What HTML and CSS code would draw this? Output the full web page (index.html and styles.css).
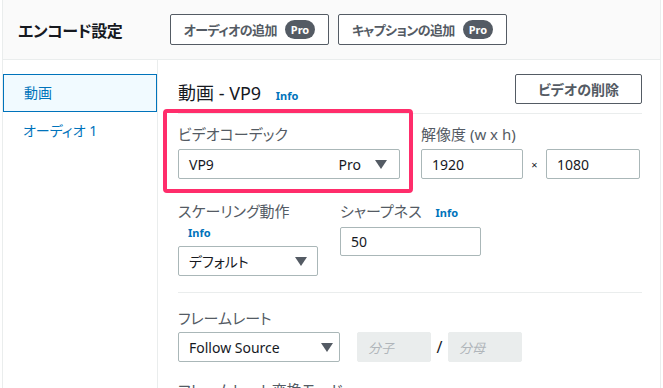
FILE: index.html
```html
<!DOCTYPE html>
<html lang="ja">
<head>
    <meta charset="UTF-8">
    <meta name="viewport" content="width=device-width, initial-scale=1.0">
    <title>エンコード設定</title>
    <link rel="stylesheet" href="styles.css">
</head>
<body>

    <div class="panel">

        <div class="header">
            <div class="head-title">エンコード設定</div>
            <button class="btn">オーディオの追加 <span class="pro">Pro</span></button>
            <button class="btn">キャプションの追加 <span class="pro">Pro</span></button>
        </div>

        <div class="body-block">
            <div class="side">
                <div class="side-item active">動画</div>
                <div class="side-item">オーディオ 1</div>
            </div>

            <div class="main">
                <div class="main-head">
                    <div class="main-title">動画 - VP9 <span class="info">Info</span></div>
                    <button class="btn btn-del">ビデオの削除</button>
                </div>

                <div class="row row-1">
                    <div class="field f-codec">
                        <div class="label">ビデオコーデック</div>
                        <div class="select">
                            <span>VP9</span>
                            <span class="sel-right">Pro <svg class="arrow" viewBox="0 0 12 9"><path d="M0 0h12L6 9z"/></svg></span>
                        </div>
                    </div>
                    <div class="field f-res">
                        <div class="label">解像度 (w x h)</div>
                        <div class="res-inputs">
                            <div class="input in-w">1920</div>
                            <span class="times">×</span>
                            <div class="input in-h">1080</div>
                        </div>
                    </div>
                    <div class="highlight"></div>
                </div>

                <div class="row row-2">
                    <div class="field f-scale">
                        <div class="label">スケーリング動作</div>
                        <div class="info info-line">Info</div>
                        <div class="select">
                            <span>デフォルト</span>
                            <svg class="arrow" viewBox="0 0 12 9"><path d="M0 0h12L6 9z"/></svg>
                        </div>
                    </div>
                    <div class="field f-sharp">
                        <div class="label">シャープネス <span class="info">Info</span></div>
                        <div class="input in-sharp">50</div>
                    </div>
                </div>

                <div class="row row-3">
                    <div class="field">
                        <div class="label">フレームレート</div>
                        <div class="fps">
                            <div class="select sel-fps">
                                <span>Follow Source</span>
                                <svg class="arrow" viewBox="0 0 12 9"><path d="M0 0h12L6 9z"/></svg>
                            </div>
                            <div class="input disabled">分子</div>
                            <span class="slash">/</span>
                            <div class="input disabled">分母</div>
                        </div>
                    </div>
                </div>

                <div class="row row-4">
                    <div class="label">フレームレート変換モード</div>
                </div>
            </div>
        </div>

    </div>

</body>
</html>
```

FILE: styles.css
```css
:root{
    --colbg: #fafafa;
    --colline: #eaeded;
    --coltext: #16191f;
    --colgray: #545b64;
    --colborder: #aab7b8;
    --colblue: #0073bb;
    --colpink: #ff2d6b;
}
body{
    margin: 0;
    padding-left: 2px;
    background: #fff;
    color: var(--coltext);
    font-family: "Noto Sans", "Noto Sans CJK JP", sans-serif;
    font-feature-settings: "palt";
    font-size: 14px;
    overflow: hidden;
}
.panel{
    width: 657px;
    height: 388px;
    border-left: 1px solid var(--colline);
    border-right: 1px solid var(--colline);
    overflow: hidden;
}
button{
    font-family: inherit;
    font-feature-settings: "palt";
}
.header{
    display: flex;
    align-items: center;
    height: 59px;
    padding-left: 15px;
    background: var(--colbg);
    border-bottom: 1px solid var(--colline);
}
.head-title{
    width: 152px;
    font-size: 16px;
    font-weight: 700;
    letter-spacing: -0.4px;
}
.btn{
    display: flex;
    align-items: center;
    justify-content: center;
    gap: 8px;
    height: 31px;
    margin-right: 9px;
    padding: 0 12px;
    background: #fff;
    border: 1px solid var(--colgray);
    border-radius: 2px;
    color: var(--colgray);
    font-size: 14px;
    font-weight: 700;
    white-space: nowrap;
}
.header .btn{
    font-size: 13px;
    letter-spacing: -0.6px;
}
.header .btn:first-of-type{
    width: 159px;
}
.header .btn:last-of-type{
    width: 169px;
}
.pro{
    display: inline-block;
    padding: 0 6px;
    height: 19px;
    line-height: 19px;
    border-radius: 10px;
    background: var(--colgray);
    color: #fff;
    font-size: 11px;
    font-weight: 700;
    letter-spacing: 0;
}
.body-block{
    display: flex;
}
.side{
    width: 154px;
    padding-top: 14px;
    border-right: 1px solid var(--colline);
    height: 330px;
}
.side-item{
    height: 38px;
    line-height: 38px;
    padding-left: 20px;
    color: var(--colblue);
    font-size: 14px;
}
.side-item.active{
    height: 36px;
    line-height: 36px;
    background: #f1faff;
    border: 1px solid var(--colblue);
}
.main{
    flex: 1;
    padding: 15px 18px 0 20px;
}
.main-head{
    display: flex;
    justify-content: space-between;
    align-items: center;
    height: 38px;
    border-bottom: 1px solid var(--colline);
}
.main-title{
    font-size: 18px;
    margin-top: -5px;
}
.main-title .info{
    margin-left: 10px;
}
.info{
    margin-left: 10px;
    color: var(--colblue);
    font-size: 11px;
    font-weight: 700;
}
.btn-del{
    width: 127px;
    height: 30px;
    margin: -10px 0 0 0;
}
.row{
    position: relative;
    display: flex;
}
.label{
    color: var(--colgray);
    font-size: 15px;
    line-height: 20px;
}
.select, .input{
    box-sizing: border-box;
    display: flex;
    align-items: center;
    height: 30px;
    padding: 0 10px;
    border: 1px solid var(--colborder);
    border-radius: 2px;
    background: #fff;
    font-size: 14px;
}
.select{
    justify-content: space-between;
}
.sel-right{
    display: flex;
    align-items: center;
    gap: 14px;
}
.arrow{
    width: 12px;
    height: 9px;
    fill: var(--colgray);
}
.row-1{
    padding-top: 10px;
    gap: 21px;
}
.row-1 .label{
    margin-bottom: 5px;
}
.f-codec{
    width: 222px;
}
.f-codec .select{
    padding-right: 12px;
}
.res-inputs{
    display: flex;
    align-items: center;
}
.in-w{
    width: 102px;
}
.in-h{
    width: 94px;
}
.times{
    width: 23px;
    text-align: center;
    font-size: 11px;
}
.highlight{
    position: absolute;
    left: -15px;
    top: -5px;
    width: 242px;
    height: 76px;
    border: 4px solid var(--colpink);
    border-radius: 4px;
}
.row-2{
    box-sizing: border-box;
    height: 114px;
    padding-top: 22px;
    gap: 22px;
    border-bottom: 1px solid var(--colline);
}
.f-scale{
    width: 140px;
}
.info-line{
    margin: 4px 0 5px 10px;
    line-height: 16px;
}
.in-sharp{
    width: 141px;
    height: 29px;
    margin-top: 4px;
}
.row-3{
    padding-top: 15px;
}
.row-3 .label{
    margin-bottom: 4px;
}
.fps{
    display: flex;
    align-items: center;
}
.sel-fps{
    width: 162px;
    padding-right: 6px;
    margin-right: 17px;
}
.input.disabled{
    width: 74px;
    border-color: var(--colline);
    background: var(--colline);
    color: #b0b5ba;
    font-style: italic;
    font-size: 13px;
}
.slash{
    width: 17px;
    text-align: center;
    font-size: 16px;
}
.row-4{
    padding-top: 18px;
}
```
